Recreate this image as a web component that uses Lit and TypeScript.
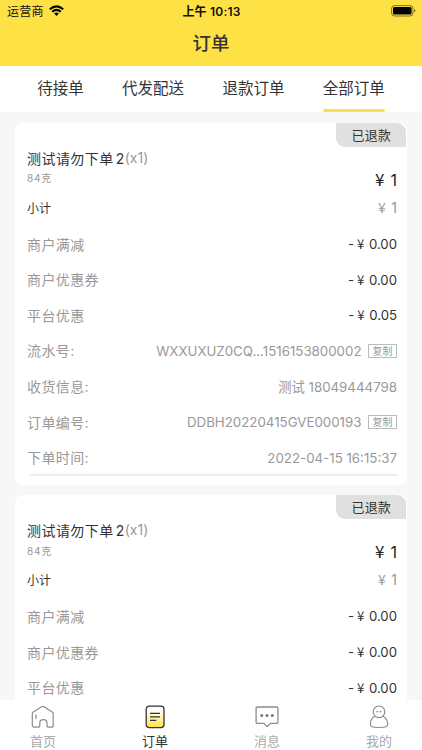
import { LitElement, html, css, svg } from "lit";
import { customElement, property } from "lit/decorators.js";

interface Row {
  label: string;
  value: string;
  kind: "money" | "info";
  copy?: boolean;
}

const ROWS: Row[] = [
  { label: "商户满减", value: "0.00", kind: "money" },
  { label: "商户优惠券", value: "0.00", kind: "money" },
  { label: "平台优惠", value: "0.05", kind: "money" },
  { label: "流水号:", value: "WXXUXUZ0CQ...1516153800002", kind: "info", copy: true },
  { label: "收货信息:", value: "测试 18049444798", kind: "info" },
  { label: "订单编号:", value: "DDBH20220415GVE000193", kind: "info", copy: true },
  { label: "下单时间:", value: "2022-04-15 16:15:37", kind: "info" },
];

// The second order was not discounted by the platform.
const ROWS_PLAIN: Row[] = ROWS.map((r) => (r.label === "平台优惠" ? { ...r, value: "0.00" } : r));

@customElement("order-card")
export class OrderCard extends LitElement {
  @property({ attribute: false }) rows: Row[] = [];

  static styles = css`
    :host {
      display: block;
      height: 362px;
      flex: none;
      box-sizing: border-box;
      background: #fff;
      border-radius: 8px;
      padding: 0 10px 0 12px;
      position: relative;
      color: #333;
    }
    .badge {
      position: absolute;
      top: 0;
      right: 1.5px;
      width: 69.5px;
      height: 24px;
      line-height: 24px;
      text-align: center;
      background: #e0e0e0;
      border-radius: 0 9px 0 9px;
      font-size: 13px;
      letter-spacing: 0.2px;
      text-indent: 1px;
    }
    .name {
      display: flex;
      padding-top: 25px;
      height: 21px;
      line-height: 21px;
      font-size: 14px;
      letter-spacing: 0.45px;
    }
    .name .num {
      margin-left: 2px;
      letter-spacing: 0;
    }
    .name .qty {
      color: #999;
      letter-spacing: 0;
      margin-left: 0.5px;
      position: relative;
      top: -1px;
    }
    .line {
      display: flex;
      justify-content: space-between;
      align-items: center;
    }
    .spec {
      height: 22px;
    }
    .weight {
      font-size: 10px;
      color: #999;
      letter-spacing: 0.8px;
      position: relative;
      top: -2px;
    }
    .yen {
      font-family: "Noto Sans CJK SC", sans-serif;
      line-height: 1;
    }
    .price,
    .amount,
    .money {
      display: flex;
      align-items: baseline;
      line-height: 1.2;
    }
    .price {
      font-size: 16px;
      gap: 6px;
      color: #222;
    }
    .price .yen {
      font-size: 17px;
    }
    .sub {
      height: 33px;
      font-size: 12px;
    }
    .sub .amount {
      font-size: 14px;
      gap: 5.6px;
      padding-top: 1.4px;
      color: #999;
    }
    .row {
      height: 35.65px;
      font-size: 14px;
    }
    .rows {
      padding-top: 2.5px;
    }
    .label {
      color: #999;
      letter-spacing: 0.4px;
      position: relative;
      top: -0.6px;
    }
    .money {
      font-size: 13.2px;
      color: #333;
      padding-top: 1.4px;
    }
    .money .yen {
      margin: 0 4.6px 0 3px;
    }
    .info {
      display: flex;
      align-items: center;
      font-size: 13.3px;
      line-height: 16px;
      color: #999;
    }
    .copy {
      margin-left: 6.5px;
      width: 27px;
      height: 12px;
      line-height: 12px;
      text-align: center;
      border: 1px solid #bbb;
      font-size: 10px;
    }
    .rule {
      height: 1.5px;
      margin: -1.5px 0 0 3px;
      background: #eee;
    }
  `;

  render() {
    return html`
      <div class="badge">已退款</div>
      <div class="name"><span>测试请勿下单</span><span class="num">2</span><span class="qty">(x1)</span></div>
      <div class="line spec">
        <span class="weight">84克</span><span class="price"><span class="yen">¥</span><span>1</span></span>
      </div>
      <div class="line sub">
        <span>小计</span><span class="amount"><span class="yen">¥</span><span>1</span></span>
      </div>
      <div class="rows">
        ${this.rows.map(
          (r) => html`<div class="line row">
            <span class="label">${r.label}</span>
            ${r.kind === "money"
              ? html`<span class="money"><span>-</span><span class="yen">¥</span><span>${r.value}</span></span>`
              : html`<span class="info">${r.value}${r.copy ? html`<span class="copy">复制</span>` : ""}</span>`}
          </div>`
        )}
      </div>
      <div class="rule"></div>
    `;
  }
}

const homeIcon = svg`<g fill="none" stroke="#8c8c8c" stroke-width="1.2" stroke-linejoin="round" stroke-linecap="round">
  <path d="M1.3 8.9 Q1.3 7.7 2.3 7 L10.6 1.7 Q11.8 1 13 1.7 L21.2 7 Q22.2 7.7 22.2 8.9 V20.2 Q22.2 22.2 20.2 22.2 H18 Q16 22.2 16 20.2 V17.8 Q16 14.7 12.4 14.7 Q8.8 14.7 8.8 17.8 V20.2 Q8.8 22.2 6.8 22.2 H3.3 Q1.3 22.2 1.3 20.2 Z"/><path d="M5 9.8 V13.4"/></g>`;
const orderIcon = svg`<defs><linearGradient id="paper" x1="0" y1="0" x2="0" y2="1"><stop offset=".25" stop-color="#fffef6"/><stop offset="1" stop-color="#ffe23e"/></linearGradient></defs>
  <rect x="3.2" y="1.2" width="17.8" height="21.4" rx="3" fill="url(#paper)" stroke="#333" stroke-width="1.3"/>
  <path d="M7 8.4 H17 M7 11.9 H17 M7 15.4 H13.3" stroke="#333" stroke-width="1.2"/>`;
const chatIcon = svg`<path d="M2.3 2 H21.7 Q22.9 2 22.9 3.2 V17.2 Q22.9 18.4 21.7 18.4 H15.4 L12.2 21.6 L9 18.4 H2.3 Q1.1 18.4 1.1 17.2 V3.2 Q1.1 2 2.3 2 Z" fill="none" stroke="#8c8c8c" stroke-width="1.3" stroke-linejoin="round"/>
  <g fill="#777"><circle cx="6.7" cy="10.4" r="1.5"/><circle cx="12" cy="10.4" r="1.5"/><circle cx="17.3" cy="10.4" r="1.5"/></g>`;
const meIcon = svg`<g fill="none" stroke="#8c8c8c" stroke-width="1.2"><circle cx="12" cy="6.8" r="5.8"/>
  <path d="M8 11.2 C4.9 12.9 3.3 16.2 3.3 19 C3.3 21.7 5.3 22.5 12 22.5 C18.7 22.5 20.7 21.7 20.7 19 C20.7 16.2 19.1 12.9 16 11.2"/></g>
  <g fill="#8c8c8c"><circle cx="10.3" cy="6.6" r=".9"/><circle cx="13.5" cy="6.6" r=".9"/></g>`;

const TABS = ["待接单", "代发配送", "退款订单", "全部订单"];
const NAV = [
  { label: "首页", icon: homeIcon },
  { label: "订单", icon: orderIcon },
  { label: "消息", icon: chatIcon },
  { label: "我的", icon: meIcon },
];

@customElement("app-root")
export class AppRoot extends LitElement {
  static styles = css`
    :host {
      display: flex;
      flex-direction: column;
      width: 422px;
      height: 750px;
      overflow: hidden;
      background: #f7f7f7;
      font-family: Inter, "Noto Sans CJK SC", sans-serif;
    }
    .header {
      flex: none;
      height: 65.6px;
      background: #fee144;
      color: #111;
    }
    .status {
      display: grid;
      grid-template-columns: 1fr auto 1fr;
      align-items: center;
      height: 22px;
      padding: 0 6px 0 7px;
      font-size: 12px;
    }
    .carrier {
      display: flex;
      align-items: center;
      gap: 5px;
      letter-spacing: 0.2px;
      position: relative;
      top: -0.6px;
    }
    .clock {
      font-weight: 600;
      letter-spacing: 0.2px;
      position: relative;
      top: -0.6px;
    }
    .battery {
      justify-self: end;
    }
    svg {
      display: block;
    }
    .title {
      height: 42px;
      line-height: 42px;
      text-align: center;
      font-size: 18.5px;
      font-weight: 500;
      color: #333;
    }
    .tabs {
      flex: none;
      box-sizing: border-box;
      display: flex;
      gap: 38.3px;
      height: 46.9px;
      padding-left: 37.3px;
      background: #fff;
      color: #333;
      font-size: 15.5px;
      line-height: 46px;
    }
    .tab {
      height: 46.4px;
      box-sizing: border-box;
    }
    .active {
      position: relative;
    }
    .active::after {
      content: "";
      position: absolute;
      left: 0;
      right: 0;
      bottom: 0;
      height: 3px;
      border-radius: 2px;
      background: #fbdf4a;
    }
    .list {
      flex: 1;
      min-height: 0;
      overflow: hidden;
      display: flex;
      flex-direction: column;
      gap: 10.6px;
      padding: 10.3px 15px 0 15px;
    }
    .nav {
      flex: none;
      display: grid;
      grid-template-columns: repeat(4, 112px);
      justify-content: center;
      height: 50px;
      background: #fff;
      color: #aaa;
      font-size: 13px;
      line-height: 18px;
    }
    .item {
      display: flex;
      flex-direction: column;
      align-items: center;
      padding-top: 5px;
      gap: 3px;
    }
    .current {
      color: #333;
    }
  `;

  render() {
    return html`
      <div class="header">
        <div class="status">
          <div class="carrier">
            <span>运营商</span>
            <svg width="15" height="11" viewBox="0 0 15 11">
              <g fill="none" stroke="#000" stroke-width="2.1">
                <path d="M.8 4.2 Q7.5 -1.6 14.2 4.2" />
                <path d="M3.2 6.8 Q7.5 3 11.8 6.8" />
              </g>
              <path d="M5.1 8.5 Q7.5 6.7 9.9 8.5 L7.5 11 Z" />
            </svg>
          </div>
          <div class="clock">上午 10:13</div>
          <svg class="battery" width="25" height="12" viewBox="0 0 25 12">
            <rect x=".6" y=".6" width="21.4" height="10.4" rx="3" fill="none" stroke="#000" stroke-opacity=".5" />
            <rect x="2" y="2" width="18.6" height="7.6" rx="1.6" />
            <path d="M23.2 4 Q24.6 4.6 24.6 5.8 Q24.6 7 23.2 7.6 Z" fill-opacity=".5" />
          </svg>
        </div>
        <div class="title">订单</div>
      </div>
      <div class="tabs">
        ${TABS.map((t, i) => html`<div class="tab ${i === 3 ? "active" : ""}">${t}</div>`)}
      </div>
      <div class="list">
        <order-card .rows=${ROWS}></order-card>
        <order-card .rows=${ROWS_PLAIN}></order-card>
      </div>
      <div class="nav">
        ${NAV.map(
          (n, i) => html`<div class="item ${i === 1 ? "current" : ""}">
            <svg width="24" height="24" viewBox="0 0 24 24">${n.icon}</svg>
            <span>${n.label}</span>
          </div>`
        )}
      </div>
    `;
  }
}
